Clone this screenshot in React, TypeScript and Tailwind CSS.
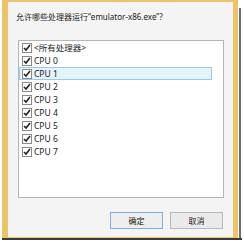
import React from 'react';

const items = ['<所有处理器>', 'CPU 0', 'CPU 1', 'CPU 2', 'CPU 3', 'CPU 4', 'CPU 5', 'CPU 6', 'CPU 7'];

const CheckBox = () => (
  <div className="w-[10px] h-[10px] border border-[#8a8a8a] bg-white flex items-center justify-center flex-shrink-0">
    <svg width="8" height="8" viewBox="0 0 8 8">
      <path d="M1 4 L3 6 L7 1" fill="none" stroke="#222" strokeWidth="1.6" />
    </svg>
  </div>
);

const App = () => {
  return (
    <div
      className="w-[244px] h-[242px] bg-white relative overflow-hidden"
      style={{ fontFamily: '"Noto Sans", "Noto Sans CJK SC", sans-serif' }}
    >
      <div className="flex">
        <div className="ml-[2px] w-[236px] h-[238px] bg-[#edc46c] pl-[6px] pr-[5px] pt-[2px] pb-[1px]">
          <div className="w-full h-full bg-[#f4f4f4] pl-[8px] pt-[9px] flex flex-col">
            <div className="text-[8px] leading-[12px] text-[#1a1a1a]">允许哪些处理器运行“emulator-x86.exe”?</div>

            <div className="mt-[17px] ml-[2px] w-[206px] h-[158px] border border-[#b5b5b5] bg-white flex flex-col">
              {items.map((label, i) => (
                <div
                  key={label}
                  className={
                    i === 2
                      ? 'h-[13px] w-[193px] flex items-center gap-[2px] pl-[2px] border border-[#99c9ef] bg-[#e5f3fb]'
                      : 'h-[13px] w-[193px] flex items-center gap-[2px] pl-[3px]'
                  }
                >
                  <CheckBox />
                  <span className="text-[8.5px] leading-[11px] text-[#1a1a1a] whitespace-nowrap">{label}</span>
                </div>
              ))}
            </div>

            <div className="mt-[14px] ml-[94px] flex gap-[7px]">
              <button className="w-[53px] h-[17px] border border-[#7fb0dc] bg-[#eeeeee] text-[8px] leading-[15px] text-[#1a1a1a]">
                确定
              </button>
              <button className="w-[53px] h-[17px] border border-[#b8b8b8] bg-[#eaeaea] text-[8px] leading-[15px] text-[#1a1a1a]">
                取消
              </button>
            </div>
          </div>
        </div>
        <div className="mt-[8px] ml-[1px] w-[2px] h-[230px] bg-[#6d6d6d]" />
      </div>
      <div className="ml-[2px] w-[240px] h-[2px] bg-[#3a3a3a]" />
    </div>
  );
};

export default App;
